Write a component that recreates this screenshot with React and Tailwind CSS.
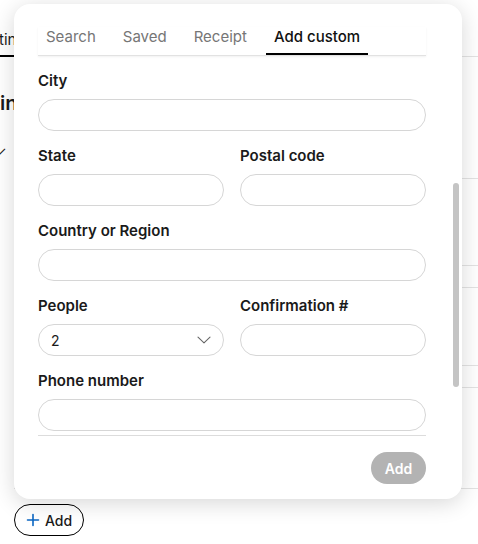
import React from "react";

function Field({ label, children, className = "" }) {
  return (
    <div className={"flex flex-col " + className}>
      <div className="text-[15px] leading-5 font-semibold text-[#1a1a1a] mb-2">{label}</div>
      {children}
    </div>
  );
}

function Input() {
  return <div className="h-8 rounded-full border border-[#d6d6d6] bg-white" />;
}

export default function App() {
  return (
    <div className="relative w-[478px] h-[544px] bg-white overflow-hidden" style={{ fontFamily: "Inter, 'Noto Sans', sans-serif" }}>
      {/* background page */}
      <div className="flex h-[504px]">
        <div className="w-[14px] overflow-hidden flex flex-col">
          <div className="h-[57px] border-b-2 border-black flex items-end pb-[5px]">
            <span className="text-[15px] leading-5 text-[#1a1a1a] whitespace-nowrap ml-[-1px]">ting</span>
          </div>
          <div className="mt-[34px] text-[20px] leading-6 font-semibold text-[#1a1a1a] whitespace-nowrap">in</div>
          <div className="mt-[28px] text-[13px] leading-4 text-[#1a1a1a] ml-[-5px]">✓</div>
        </div>
        <div className="flex-1 flex flex-col">
          <div className="h-[57px] border-b border-[#e3e3e3]" />
          <div className="h-[122px] border-b border-[#e3e3e3]" />
          <div className="h-[87px] border-b border-[#e3e3e3]" />
          <div className="h-[22px] border-b border-[#e3e3e3]" />
          <div className="h-[78px] border-b border-[#e3e3e3]" />
          <div className="h-[22px] border-b border-[#e3e3e3]" />
          <div className="h-[101px] border-b border-[#e3e3e3]" />
        </div>
      </div>
      <div className="pl-[14px]">
        <button className="h-8 w-[70px] rounded-full border border-black flex items-center justify-center gap-[5px] text-[14px] font-medium text-[#1a1a1a]">
          <svg width="14" height="14" viewBox="0 0 14 14" fill="none" stroke="#0a66c2" strokeWidth="1.6" strokeLinecap="round">
            <path d="M7 1.5v11M1.5 7h11" />
          </svg>
          Add
        </button>
      </div>

      {/* popover */}
      <div className="absolute left-[14px] top-[4px] w-[448px] h-[495px] rounded-2xl bg-white shadow-[0_4px_22px_rgba(0,0,0,0.16)] flex flex-col">
        <div className="pl-[24px] pr-[36px] pt-[23px]">
          <div className="flex gap-[11px] border-b border-[#e2e2e2] shadow-[0_1px_2px_rgba(0,0,0,0.06)]">
            {["Search", "Saved", "Receipt"].map((t) => (
              <div key={t} className="px-2 pb-[6px] border-b-2 border-transparent text-[15px] leading-5 text-[#767676]">{t}</div>
            ))}
            <div className="px-2 pb-[6px] border-b-2 border-black text-[15px] leading-5 text-[#111] font-medium">Add custom</div>
          </div>
        </div>
        <div className="pl-[24px] pr-[36px] h-[379px] overflow-hidden flex flex-col">
          <div className="pt-[15px] flex flex-col gap-[15px]">
            <Field label="City"><Input /></Field>
            <div className="grid grid-cols-2 gap-4">
              <Field label="State"><Input /></Field>
              <Field label="Postal code"><Input /></Field>
            </div>
            <Field label="Country or Region"><Input /></Field>
            <div className="grid grid-cols-2 gap-4">
              <Field label="People">
                <div className="h-8 rounded-full border border-[#d6d6d6] flex items-center justify-between pl-[12px] pr-[12px]">
                  <span className="text-[14px] text-[#1a1a1a]">2</span>
                  <svg width="14" height="8" viewBox="0 0 14 8" fill="none" stroke="#666" strokeWidth="1.1" strokeLinecap="round" strokeLinejoin="round">
                    <path d="M1 1.2l6 5.6 6-5.6" />
                  </svg>
                </div>
              </Field>
              <Field label="Confirmation #"><Input /></Field>
            </div>
            <Field label="Phone number"><Input /></Field>
          </div>
        </div>
        <div className="mx-[24px] mr-[36px] border-t border-[#dcdcdc] flex justify-end pt-[16px]">
          <button className="h-8 w-[55px] rounded-full bg-[#b3b3b3] text-white text-[14px] font-semibold">Add</button>
        </div>
        {/* scrollbar */}
        <div className="absolute left-[439px] top-[179px] w-[6px] h-[204px] rounded-full bg-[#c4c4c4]" />
      </div>
    </div>
  );
}
